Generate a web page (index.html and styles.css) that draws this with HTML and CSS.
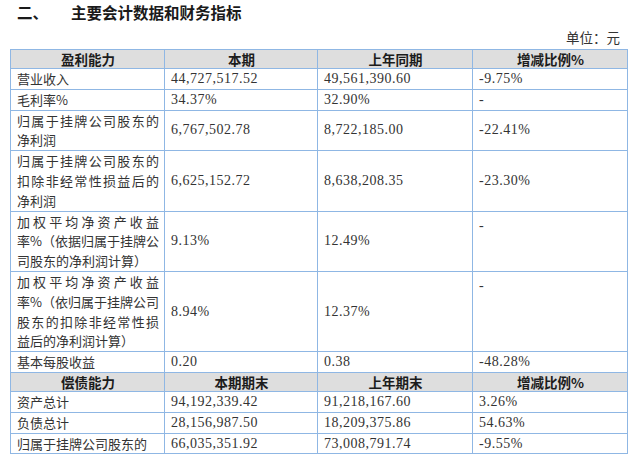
FILE: index.html
```html
<!DOCTYPE html>
<html lang="zh-CN">
<head>
<meta charset="utf-8">
<title>主要会计数据和财务指标</title>
<link rel="stylesheet" href="styles.css">
</head>
<body>
<div class="page">
  <h2 class="title"><span class="num-cn">二、</span><span>主要会计数据和财务指标</span></h2>
  <div class="unit">单位：元</div>
  <table class="fin">
    <colgroup>
      <col class="c1"><col class="c2"><col class="c3"><col class="c4">
    </colgroup>
    <tr class="head">
      <th>盈利能力</th><th>本期</th><th>上年同期</th><th>增减比例%</th>
    </tr>
    <tr>
      <td class="label">营业收入</td><td class="num">44,727,517.52</td><td class="num">49,561,390.60</td><td class="num">-9.75%</td>
    </tr>
    <tr>
      <td class="label">毛利率%</td><td class="num">34.37%</td><td class="num">32.90%</td><td class="num">-</td>
    </tr>
    <tr>
      <td class="label"><span class="j">归属于挂牌公司股东的</span>净利润</td><td class="num">6,767,502.78</td><td class="num">8,722,185.00</td><td class="num">-22.41%</td>
    </tr>
    <tr>
      <td class="label"><span class="j">归属于挂牌公司股东的</span><span class="j">扣除非经常性损益后的</span>净利润</td><td class="num">6,625,152.72</td><td class="num">8,638,208.35</td><td class="num">-23.30%</td>
    </tr>
    <tr>
      <td class="label"><span class="j">加权平均净资产收益</span><span class="j">率%（依据归属于挂牌公</span>司股东的净利润计算）</td><td class="num">9.13%</td><td class="num">12.49%</td><td class="num top">-</td>
    </tr>
    <tr>
      <td class="label"><span class="j">加权平均净资产收益</span><span class="j">率%（依归属于挂牌公司</span><span class="j">股东的扣除非经常性损</span>益后的净利润计算）</td><td class="num">8.94%</td><td class="num">12.37%</td><td class="num top">-</td>
    </tr>
    <tr>
      <td class="label">基本每股收益</td><td class="num">0.20</td><td class="num">0.38</td><td class="num">-48.28%</td>
    </tr>
    <tr class="head">
      <th>偿债能力</th><th>本期期末</th><th>上年期末</th><th>增减比例%</th>
    </tr>
    <tr>
      <td class="label">资产总计</td><td class="num">94,192,339.42</td><td class="num">91,218,167.60</td><td class="num">3.26%</td>
    </tr>
    <tr>
      <td class="label">负债总计</td><td class="num">28,156,987.50</td><td class="num">18,209,375.86</td><td class="num">54.63%</td>
    </tr>
    <tr>
      <td class="label">归属于挂牌公司股东的</td><td class="num">66,035,351.92</td><td class="num">73,008,791.74</td><td class="num">-9.55%</td>
    </tr>
  </table>
</div>
</body>
</html>
```

FILE: styles.css
```css
html, body {
  margin: 0;
  padding: 0;
  background: #ffffff;
}

body {
  font-family: "Noto Sans CJK SC", sans-serif;
  color: #2b2b2b;
}

.page {
  padding: 0 0 0 10px;
  width: 617px;
}

.title {
  margin: 0;
  height: 26px;
  line-height: 24px;
  padding-left: 7px;
  font-family: "Noto Sans CJK SC", sans-serif;
  font-size: 15.5px;
  font-weight: 700;
  color: #1a1a1a;
  display: flex;
}

.num-cn {
  width: 54px;
}

.unit {
  height: 23px;
  line-height: 23px;
  text-align: right;
  padding-right: 7px;
  font-family: "Noto Sans CJK SC", sans-serif;
  font-size: 13.5px;
  color: #333;
}

.fin {
  border-collapse: collapse;
  table-layout: fixed;
  width: 617px;
}

.c1 { width: 154px; }
.c2 { width: 153px; }
.c3 { width: 155px; }
.c4 { width: 155px; }

.fin th,
.fin td {
  border: 1px solid #8fb7e4;
  padding: 0 5px 0 6px;
  vertical-align: middle;
}

.fin th {
  background: #dedede;
  font-family: "Noto Sans CJK SC", sans-serif;
  font-weight: 700;
  font-size: 13.5px;
  line-height: 18px;
  color: #1c1c1c;
  text-align: center;
}

.fin td {
  line-height: 19.8px;
}

.label {
  font-family: "Noto Sans CJK SC", sans-serif;
  font-size: 13px;
  color: #333;
}

.j {
  display: block;
  text-align: justify;
  text-align-last: justify;
}

.num {
  font-family: "Liberation Serif", serif;
  font-size: 14px;
  letter-spacing: 0.5px;
  color: #333;
}

.fin td.top {
  vertical-align: top;
  padding-top: 4px;
}
```
